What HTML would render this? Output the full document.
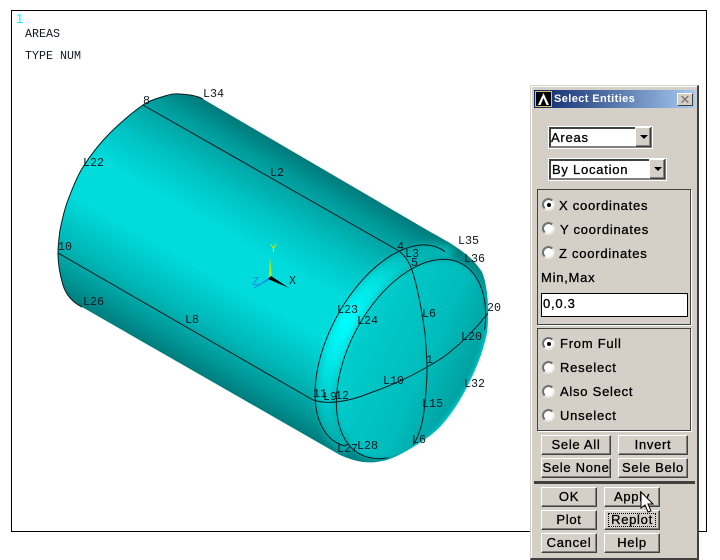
<!DOCTYPE html>
<html><head><meta charset="utf-8">
<style>
html,body{margin:0;padding:0;background:#fff;width:720px;height:560px;overflow:hidden}
*{box-sizing:border-box}
#frame{position:absolute;left:11px;top:10px;width:696px;height:522px;border:1px solid #000}
svg{position:absolute;left:0;top:0}
svg text{font-family:"Liberation Mono",monospace;font-size:11.67px;fill:#101820}
.p{position:absolute}
#panel{position:absolute;left:530px;top:85px;width:169px;height:475px;background:#d4d0c8;border:1px solid #808080;border-right:2px solid #404040;border-bottom:2px solid #404040;box-shadow:inset 1px 1px 0 #fff;border-top-color:#d4d0c8;border-left-color:#d4d0c8}
.t{position:absolute;font:13px/16px "Liberation Sans",sans-serif;letter-spacing:.75px;color:#000;white-space:nowrap;-webkit-text-stroke:.3px #000}
.g{position:absolute;border:1px solid #404040;box-shadow:1px 1px 0 #fff}
.r{position:absolute;width:13px;height:13px;border-radius:50%;background:#fff;border:2px solid #9a9a96;border-top-color:#707070;border-left-color:#707070;border-right-color:#e8e8e4;border-bottom-color:#e8e8e4}
.r.on:after{content:"";position:absolute;left:2.500px;top:2.500px;width:4px;height:4px;border-radius:50%;background:#000}
.b{position:absolute;background:#d4d0c8;border:1px solid;border-color:#fff #404040 #404040 #fff;box-shadow:inset -1px -1px 0 #808080;font:13px/17px "Liberation Sans",sans-serif;letter-spacing:.7px;text-align:center;color:#000;white-space:nowrap;-webkit-text-stroke:.3px #000}
.c{position:absolute;background:#fff;border:2px solid;border-color:#404040 #808080 #808080 #404040;outline:1px solid #fff}
.a{position:absolute;background:#d4d0c8;border:1px solid;border-color:#fff #404040 #404040 #fff;box-shadow:inset -1px -1px 0 #808080}
.a:after{content:"";position:absolute;left:4px;top:7px;border-left:4px solid transparent;border-right:4px solid transparent;border-top:4px solid #000}
</style></head><body>
<div id="frame"></div>
<svg width="720" height="560" viewBox="0 0 720 560">
<defs>
<linearGradient id="body" gradientUnits="userSpaceOnUse" x1="206" y1="93" x2="82" y2="309">
<stop offset="0" stop-color="#006f6f"/><stop offset=".12" stop-color="#009a9a"/><stop offset=".3" stop-color="#00c4c4"/><stop offset=".45" stop-color="#00dcdc"/><stop offset=".62" stop-color="#00dcdc"/><stop offset=".8" stop-color="#00b8b8"/><stop offset=".92" stop-color="#009696"/><stop offset="1" stop-color="#007a7a"/>
</linearGradient>
<linearGradient id="cap" gradientUnits="userSpaceOnUse" x1="345" y1="330" x2="490" y2="395">
<stop offset="0" stop-color="#00d0d0"/><stop offset=".55" stop-color="#00bcbc"/><stop offset="1" stop-color="#009090"/>
</linearGradient>
<linearGradient id="ring" gradientUnits="userSpaceOnUse" x1="410" y1="250" x2="325" y2="450">
<stop offset="0" stop-color="#00b4b4"/><stop offset=".18" stop-color="#00e0e0"/><stop offset=".42" stop-color="#00ffff"/><stop offset=".65" stop-color="#00e4e4"/><stop offset=".85" stop-color="#00c0c0"/><stop offset="1" stop-color="#00a4a4"/>
</linearGradient>
<filter id="bl" x="-30%" y="-30%" width="160%" height="160%"><feGaussianBlur stdDeviation="3.5"/></filter>
<filter id="bl2" x="-10%" y="-10%" width="120%" height="120%"><feGaussianBlur stdDeviation="2"/></filter>
<clipPath id="bc"><path d="M203,99 L427,230 C436,235 443,239 450,243 C456,247 462,251 467,255 C473,260 478,266 482,272 C485,279 486,286 487,293 C488,301 488,309 488,317 C488,327 487,336 484,345 C480,360 474,373 467,387 C460,401 451,415 440,427 C432,435 423,441 413,447 C405,452 396,457 387,460 C379,462 371,463 363,462 C355,461 347,458 340,455 L82,307 C72,302 66,295 63,285 C60,275 58,265 58,253 C58,245 59,238 60,230 C62,221 64,210 68,200 C72,190 76,178 83,167 C90,156 100,143 110,133 C120,123 134,111 143,105 C152,99 159,98 165,96 C171,94 174,93.500 180,94 C186,94.500 196,95 203,99 Z"/></clipPath>
<clipPath id="oc"><polygon points="452,238 300,180 230,400 340,456"/></clipPath>
<clipPath id="ic"><polygon points="495,313 413,446 340,480 300,300 400,230 495,250"/></clipPath>
</defs>
<path d="M203,99 L427,230 C436,235 443,239 450,243 C456,247 462,251 467,255 C473,260 478,266 482,272 C485,279 486,286 487,293 C488,301 488,309 488,317 C488,327 487,336 484,345 C480,360 474,373 467,387 C460,401 451,415 440,427 C432,435 423,441 413,447 C405,452 396,457 387,460 C379,462 371,463 363,462 C355,461 347,458 340,455 L82,307 C72,302 66,295 63,285 C60,275 58,265 58,253 C58,245 59,238 60,230 C62,221 64,210 68,200 C72,190 76,178 83,167 C90,156 100,143 110,133 C120,123 134,111 143,105 C152,99 159,98 165,96 C171,94 174,93.500 180,94 C186,94.500 196,95 203,99 Z" fill="url(#body)"/>
<g clip-path="url(#bc)">
<path d="M461.7,263.6 A108 62 -62 1 0 360.3,454.4 A108 62 -62 1 0 461.7,263.6 Z" fill="url(#cap)" filter="url(#bl2)"/>
<path d="M450.7,256.6 A108 61 -62 0 0 349.3,447.400" fill="none" stroke="url(#ring)" stroke-width="17" filter="url(#bl)"/>
</g>
<g fill="none" stroke="#08181c" stroke-width="1">
<path d="M143,105 L399,251"/>
<path d="M58,253 L313,400"/>
<path d="M82,307 C72,302 66,295 63,285 C60,275 58,265 58,253 C58,245 59,238 60,230 C62,221 64,210 68,200 C72,190 76,178 83,167 C90,156 100,143 110,133 C120,123 134,111 143,105 C152,99 159,98 165,96 C171,94 174,93.500 180,94 C186,94.500 196,95 203,99"/>
<g clip-path="url(#oc)"><ellipse cx="389" cy="346" rx="110" ry="60" transform="rotate(-62 389 346)"/></g>
<g clip-path="url(#ic)"><ellipse cx="411" cy="359" rx="108" ry="62" transform="rotate(-62 411 359)"/></g>
<path d="M400,252 C405,256 408,261 410,265 C414,274 416,284 418,293 C421,306 423,320 425,333 C426,346 427,358 427,370 C427,381 426,392 425,403 C424,412 423,422 420,430 C418,436 416,441 413,445"/>
<path d="M313,400 C320,402 328,403 335,402 C348,401 358,398 370,393 C390,386 410,377 427,367 C436,362 443,358 450,352 C465,340 478,326 488,313"/>
</g>
<polygon points="269,279 270,257 272,279" fill="#c8e600"/>
<polygon points="270,277 271,279 255,288 253,288" fill="#1e90e0"/>
<polygon points="268,279 271,276 289,288" fill="#000"/>
<text x="16" y="23" style="fill:#00ffff;font-family:'Liberation Sans';font-size:13px">1</text>
<text x="25" y="37">AREAS</text><text x="25" y="59">TYPE NUM</text>
<text x="143" y="104">8</text><text x="203" y="97">L34</text><text x="83" y="166">L22</text>
<text x="270" y="176">L2</text><text x="58" y="250">10</text><text x="83" y="305">L26</text>
<text x="185" y="323">L8</text><text x="397" y="250">4</text><text x="405" y="257">L3</text>
<text x="411" y="266">5</text><text x="458" y="244">L35</text><text x="464" y="262">L36</text>
<text x="487" y="311">20</text><text x="337" y="313">L23</text><text x="357" y="324">L24</text>
<text x="422" y="317">L6</text><text x="461" y="340">L20</text><text x="426" y="363">1</text>
<text x="383" y="384">L10</text><text x="464" y="387">L32</text><text x="313" y="397">11</text>
<text x="323" y="400">L9</text><text x="335" y="399">12</text><text x="422" y="407">L15</text>
<text x="412" y="443">L6</text><text x="337" y="452">L27</text><text x="357" y="449">L28</text>
<text x="270" y="252" style="fill:#c8e600">Y</text>
<text x="289" y="284" style="fill:#102020">X</text>
<text x="252" y="285" style="fill:#1e90e0">Z</text>
</svg>

<div id="panel"></div>
<div class="p" style="left:534px;top:90px;width:161px;height:18px;background:linear-gradient(90deg,#0a246a,#a6caf0)"></div>
<svg width="720" height="560" viewBox="0 0 720 560" style="z-index:1">
<rect x="535" y="91" width="17" height="16" fill="#000"/>
<rect x="535.5" y="91.5" width="16" height="15" fill="none" stroke="#d8c060"/>
<path d="M538,105 L543.5,93 L549,105 L546.500,105 L543.5,98 L540.500,105 Z" fill="#fff"/>
</svg>
<div class="t" style="left:554px;top:91px;font:bold 11px/16px 'Liberation Sans',sans-serif;letter-spacing:.4px;color:#fff;-webkit-text-stroke:0;z-index:2">Select Entities</div>
<div class="p" style="left:677px;top:93px;width:16px;height:13px;background:#d4d0c8;border:1px solid;border-color:#fff #404040 #404040 #fff;z-index:2;color:#707070;font:13px/11px 'Liberation Sans',sans-serif;text-align:center">✕</div>

<div class="c" style="left:549px;top:127px;width:103px;height:21px"></div>
<div class="a" style="left:635px;top:127px;width:16px;height:20px"></div>
<div class="t" style="left:551px;top:130px">Areas</div>
<div class="c" style="left:549px;top:159px;width:117px;height:21px"></div>
<div class="a" style="left:649px;top:159px;width:16px;height:20px"></div>
<div class="t" style="left:552px;top:162px">By Location</div>

<div class="g" style="left:537px;top:189px;width:154px;height:136px"></div>
<div class="r on" style="left:542px;top:198px"></div><div class="t" style="left:559px;top:198px">X coordinates</div>
<div class="r" style="left:542px;top:222px"></div><div class="t" style="left:560px;top:222px">Y coordinates</div>
<div class="r" style="left:542px;top:246px"></div><div class="t" style="left:559px;top:246px">Z coordinates</div>
<div class="t" style="left:541px;top:270px">Min,Max</div>
<div class="p" style="left:541px;top:293px;width:147px;height:24px;background:#fff;border:1px solid #000"></div>
<div class="t" style="left:543px;top:296px">0,0.3</div>

<div class="g" style="left:537px;top:328px;width:154px;height:103px"></div>
<div class="r on" style="left:542px;top:337px"></div><div class="t" style="left:560px;top:336px">From Full</div>
<div class="r" style="left:542px;top:361px"></div><div class="t" style="left:560px;top:360px">Reselect</div>
<div class="r" style="left:542px;top:385px"></div><div class="t" style="left:560px;top:384px">Also Select</div>
<div class="r" style="left:542px;top:409px"></div><div class="t" style="left:560px;top:408px">Unselect</div>

<div class="b" style="left:541px;top:435px;width:70px;height:20px">Sele All</div>
<div class="b" style="left:618px;top:435px;width:70px;height:20px">Invert</div>
<div class="b" style="left:541px;top:458px;width:70px;height:20px">Sele None</div>
<div class="b" style="left:618px;top:458px;width:70px;height:20px">Sele Belo</div>
<div class="p" style="left:534px;top:481px;width:161px;height:3px;background:#404040"></div>
<div class="b" style="left:541px;top:487px;width:56px;height:20px">OK</div>
<div class="b" style="left:604px;top:487px;width:56px;height:20px">Apply</div>
<div class="b" style="left:541px;top:510px;width:56px;height:20px">Plot</div>
<div class="b" style="left:604px;top:510px;width:56px;height:20px">Replot<div class="p" style="left:3px;top:2px;width:48px;height:14px;border:1px dotted #000"></div></div>
<div class="b" style="left:541px;top:533px;width:56px;height:20px">Cancel</div>
<div class="b" style="left:604px;top:533px;width:56px;height:20px">Help</div>

<svg width="720" height="560" viewBox="0 0 720 560" style="z-index:5">
<path d="M641,492 L641,508 L645,505 L648,512 L651,511 L648,504 L653,504 Z" fill="#fff" stroke="#000" stroke-width="1" stroke-linejoin="miter"/>
</svg>
</body></html>
